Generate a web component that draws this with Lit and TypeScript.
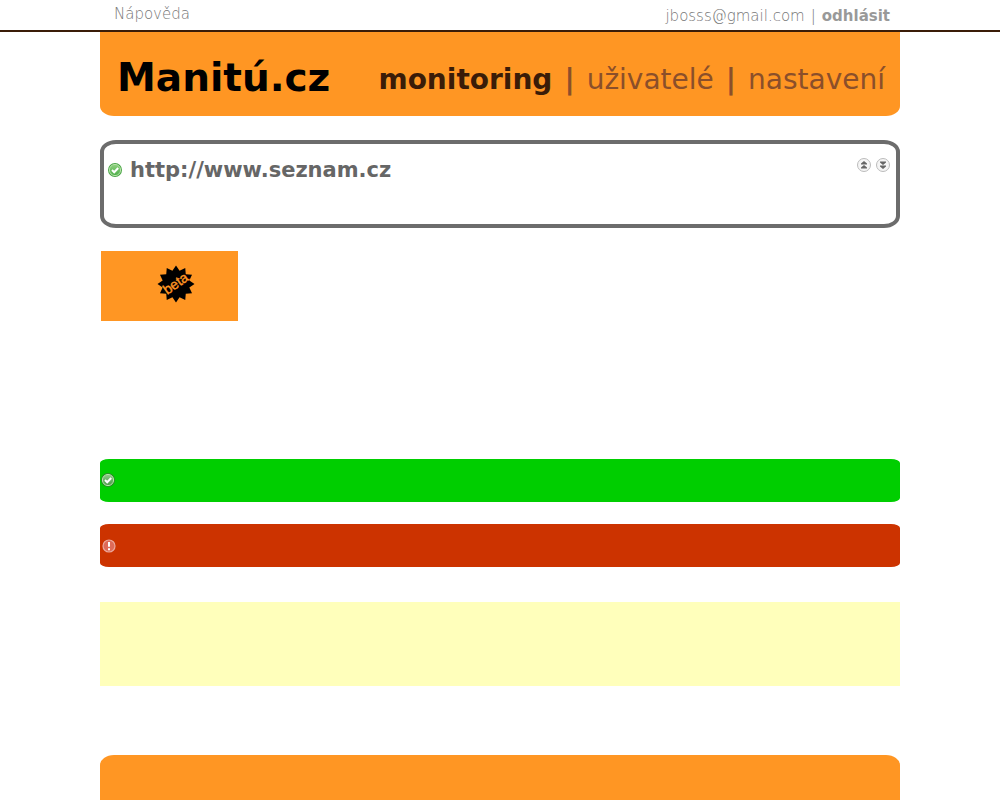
import { LitElement, html, css, svg } from "lit";
import { customElement } from "lit/decorators.js";

const points = (n: number, outer: number, inner: number) =>
  Array.from({ length: n * 2 }, (_, i) => {
    const r = i % 2 ? inner : outer;
    const a = (Math.PI * i) / n - Math.PI / 2;
    return `${(r * Math.cos(a)).toFixed(2)},${(r * Math.sin(a)).toFixed(2)}`;
  }).join(" ");

const tick = (id: string, ring: string, from: string, to: string) => html`
  <svg width="16" height="16" viewBox="0 0 16 16" aria-hidden="true">
    <defs>
      <linearGradient id=${id} x1="0" y1="0" x2="0" y2="1">
        <stop offset="0" stop-color=${from} />
        <stop offset="1" stop-color=${to} />
      </linearGradient>
    </defs>
    <circle cx="8" cy="8" r="7" fill=${ring} />
    <circle cx="8" cy="8" r="5.6" fill="url(#${id})" stroke="#b5e3a8" stroke-width="1" />
    <path d="M5 8l2.2 2.2L11.2 6" fill="none" stroke="#fff" stroke-width="2" />
  </svg>`;

const arrows = (up: boolean) => html`
  <svg width="16" height="16" viewBox="0 0 16 16" aria-hidden="true">
    <circle cx="8" cy="8" r="6.5" fill="#f5f5f5" stroke="#bcbcbc" />
    ${up
      ? svg`<path d="M8 4l3 2.4V7.4H5v-1zM8 8l3 2.4v1H5v-1z" fill="#666" />`
      : svg`<path d="M8 12l3-2.4V8.6H5v1zM8 8l3-2.4v-1H5v1z" fill="#666" />`}
  </svg>`;

@customElement("app-root")
export class AppRoot extends LitElement {
  static styles = css`
    :host {
      display: block;
      font-family: "DejaVu Sans", Verdana, sans-serif;
      background: #fff;
      color: #666;
    }
    a { color: inherit; text-decoration: none; }
    svg { display: block; }
    .top { border-bottom: 2px solid #3a1c08; }
    .wrap { max-width: 800px; margin: 0 auto; }
    .bar {
      display: flex;
      justify-content: space-between;
      box-sizing: border-box;
      height: 30px;
      padding: 0 10px 0 14px;
      font-size: 15px;
      line-height: 28px;
      font-weight: 200;
      color: #777;
    }
    .user { display: flex; gap: 6px; line-height: 32px; }
    .user b { font-weight: 700; color: #999; }
    .head {
      display: flex;
      justify-content: space-between;
      align-items: center;
      box-sizing: border-box;
      min-height: 84px;
      padding: 0 15px 0 17px;
      background: #ff9623;
      border-radius: 0 0 14px 14px / 0 0 10px 10px;
    }
    .logo {
      margin: 0;
      padding-top: 8px;
      font-size: 39px;
      line-height: 48px;
      font-weight: 700;
      color: #000;
    }
    .nav {
      display: flex;
      gap: 12px;
      padding-top: 12px;
      font-size: 28px;
      line-height: 36px;
      color: #8b4f2a;
    }
    .nav b, .nav .on { font-weight: 700; }
    .nav .on { color: #3a1c08; }
    .site {
      display: flex;
      justify-content: space-between;
      align-items: flex-start;
      box-sizing: border-box;
      min-height: 88px;
      margin-top: 24px;
      padding: 12px 5px 12px 3px;
      border: 4px solid #6c6c6c;
      border-radius: 16px / 12px;
    }
    .name { display: flex; align-items: center; gap: 7px; }
    .name h2 { margin: 0; font-size: 21px; line-height: 28px; color: #666; }
    .tools { display: flex; gap: 3px; padding-top: 1px; }
    .tools button { padding: 0; border: 0; background: none; line-height: 0; }
    .beta {
      display: flex;
      justify-content: center;
      box-sizing: border-box;
      width: 137px;
      height: 70px;
      margin: 23px 0 0 1px;
      padding: 14px 0 0 13px;
      background: #ff9623;
    }
    .beta text { font: 400 14px "Liberation Sans", Arial, sans-serif; fill: #ff9623; stroke: #ff9623; stroke-width: 0.4; }
    .msg {
      display: flex;
      align-items: center;
      box-sizing: border-box;
      height: 43px;
      border-radius: 9px / 4px;
    }
    .ok { margin-top: 138px; padding-bottom: 1px; background: #00ce00; }
    .error { margin-top: 22px; padding-left: 1px; background: #cc3300; }
    .note { height: 84px; margin-top: 35px; background: #ffffbb; }
    .foot {
      height: 45px;
      margin-top: 69px;
      background: #ff9623;
      border-radius: 14px 14px 0 0 / 10px 10px 0 0;
    }
  `;

  render() {
    return html`
      <div class="top">
        <div class="wrap bar">
          <a href="#">Nápověda</a>
          <div class="user"><span>jbosss@gmail.com</span><span>|</span><a href="#"><b>odhlásit</b></a></div>
        </div>
      </div>
      <div class="wrap">
        <header class="head">
          <h1 class="logo">Manitú.cz</h1>
          <nav class="nav">
            <a class="on" href="#">monitoring</a><b>|</b>
            <a href="#">uživatelé</a><b>|</b>
            <a href="#">nastavení</a>
          </nav>
        </header>
        <main>
          <section class="site">
            <div class="name">${tick("site", "#4aa546", "#8fd17f", "#4cae49")}<h2>http://www.seznam.cz</h2></div>
            <div class="tools">
              <button type="button" aria-label="Nahoru">${arrows(true)}</button>
              <button type="button" aria-label="Dolů">${arrows(false)}</button>
            </div>
          </section>
          <div class="beta">
            <svg width="38" height="38" viewBox="-19 -19 38 38">
              <polygon points=${points(12, 18.5, 13.8)} fill="#000" />
              <text text-anchor="middle" transform="rotate(-35)" y="4">beta</text>
            </svg>
          </div>
          <div class="msg ok">${tick("ok", "#2c8a2a", "#8fc98a", "#4a9a46")}</div>
          <div class="msg error">
            <svg width="16" height="16" viewBox="0 0 16 16" aria-hidden="true">
              <circle cx="8" cy="8" r="6" fill="#de6a58" stroke="#eba79b" stroke-width="1.2" />
              <path d="M8 4v4.8M8 10.2v2" stroke="#fff" stroke-width="2" />
            </svg>
          </div>
          <div class="note"></div>
        </main>
        <footer class="foot"></footer>
      </div>
    `;
  }
}
